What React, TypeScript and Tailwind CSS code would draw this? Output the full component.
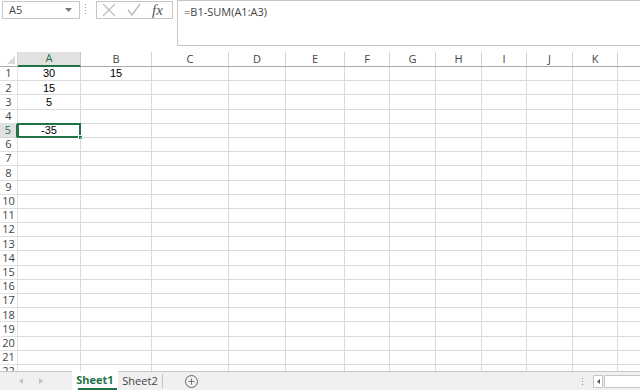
import { Plus } from 'lucide-react'

const cols = [
  { name: 'A', w: 63 },
  { name: 'B', w: 71 },
  { name: 'C', w: 77 },
  { name: 'D', w: 57 },
  { name: 'E', w: 59 },
  { name: 'F', w: 45 },
  { name: 'G', w: 46 },
  { name: 'H', w: 46 },
  { name: 'I', w: 45 },
  { name: 'J', w: 46 },
  { name: 'K', w: 45 },
  { name: 'L', w: 60 },
]

// valores de las celdas
const data: Record<string, string> = {
  A1: '30',
  B1: '15',
  A2: '15',
  A3: '5',
  A5: '-35',
}

const rows = Array.from({ length: 22 }, (_, i) => i + 1)

export default function App() {
  return (
    <div className="w-[640px] h-[390px] overflow-hidden bg-white flex flex-col text-[#444]" style={{ fontFamily: '"Open Sans", "Liberation Sans", sans-serif' }}>
      {/* barra de fórmulas */}
      <div className="h-[52px] flex items-start shrink-0">
        <div className="ml-[2px] mt-[1px] w-[78px] h-[18px] border border-[#c6c6c6] flex items-center justify-between pl-[6px] pr-[7px] text-[11px]">
          <span>A5</span>
          <svg width="7" height="4" viewBox="0 0 7 4"><path d="M0 0h7L3.5 4z" fill="#777" /></svg>
        </div>
        <div className="mt-[4px] ml-[5px] w-[2px] flex flex-col gap-[2px]">
          {[0, 1, 2, 3].map(i => <div key={i} className="w-[1px] h-[1px] bg-[#999]" />)}
        </div>
        <div className="ml-[9px] mt-[1px] w-[77px] h-[18px] border border-[#c6c6c6] flex items-center">
          <svg width="14" height="14" viewBox="0 0 14 14" className="ml-[5px]"><path d="M1 1l12 12M13 1L1 13" stroke="#bdbdbd" strokeWidth="1.2" /></svg>
          <svg width="14" height="14" viewBox="0 0 14 14" className="ml-[11px]"><path d="M1 7l4 5 8-11" stroke="#bdbdbd" strokeWidth="1.4" fill="none" /></svg>
          <span className="ml-[11px] text-[15px] italic text-[#555] leading-none" style={{ fontFamily: '"Liberation Serif", serif' }}>fx</span>
        </div>
        <div className="ml-[4px] flex-1 h-[46px] border border-[#c6c6c6] border-r-0 pl-[6px] pt-[3px] text-[11px]">
          =B1-SUM(A1:A3)
        </div>
      </div>

      {/* hoja */}
      <div className="flex-1 overflow-hidden">
        <div className="flex h-[15px] border-b border-[#ababab]">
          <div className="w-[18px] shrink-0 border-r border-[#d4d4d4] relative">
            <svg width="8" height="8" viewBox="0 0 8 8" className="absolute right-[2px] bottom-[2px]"><path d="M8 0v8H0z" fill="#dadada" /></svg>
          </div>
          {cols.map(c => (
            <div
              key={c.name}
              style={{ width: c.w }}
              className={c.name === 'A'
                ? 'shrink-0 bg-[#e1e1e1] text-[#217346] border-r border-[#c6c6c6] border-b-2 border-b-[#217346] -mb-[1px] flex items-center justify-center text-[11px]'
                : 'shrink-0 border-r border-[#d4d4d4] flex items-center justify-center text-[11px]'}
            >
              {c.name}
            </div>
          ))}
        </div>
        {rows.map(r => (
          <div key={r} className="flex h-[14.2px]">
            <div className={r === 5
              ? 'w-[18px] shrink-0 bg-[#e1e1e1] text-[#217346] border-r-2 border-r-[#217346] border-b border-[#d4d4d4] flex items-center justify-center text-[11px]'
              : 'w-[18px] shrink-0 border-r border-[#ababab] border-b border-[#e1e1e1] flex items-center justify-center text-[11px]'}>
              {r}
            </div>
            {cols.map(c => {
              const id = c.name + r
              return (
                <div key={id} style={{ width: c.w }} className="shrink-0 border-r border-b border-[#dadada] flex items-center justify-center text-[11px] text-black relative" >
                  <span style={{ fontFamily: '"Liberation Sans", sans-serif' }}>{data[id]}</span>
                  {id === 'A5' && (
                    <>
                      <div className="absolute -left-[1px] -top-[1px] -right-[1px] -bottom-[1px] border-2 border-[#217346]" />
                      <div className="absolute -right-[3px] -bottom-[3px] w-[5px] h-[5px] bg-[#217346] border border-white" />
                    </>
                  )}
                </div>
              )
            })}
          </div>
        ))}
      </div>

      {/* pestañas */}
      <div className="h-[19px] shrink-0 bg-[#f0f0f0] border-t border-[#c6c6c6] flex items-stretch text-[11px] relative">
        <div className="w-[72px] flex items-center">
          <svg width="4" height="6" viewBox="0 0 4 6" className="ml-[19px]"><path d="M4 0v6L0 3z" fill="#c0c0c0" /></svg>
          <svg width="4" height="6" viewBox="0 0 4 6" className="ml-[16px]"><path d="M0 0v6l4-3z" fill="#c0c0c0" /></svg>
        </div>
        <div className="w-[46px] bg-white -mt-[1px] flex flex-col items-center justify-center relative">
          <span className="font-bold text-[#217346]">Sheet1</span>
          <div className="absolute left-[6px] right-[1px] bottom-0 h-[2px] bg-[#217346]" />
        </div>
        <div className="w-[45px] flex items-center justify-center border-r border-[#c6c6c6] my-[2px]">Sheet2</div>
        <div className="ml-[22px] flex items-center">
          <div className="w-[13px] h-[13px] rounded-full border border-[#666] flex items-center justify-center">
            <Plus size={9} strokeWidth={2} color="#555" />
          </div>
        </div>
        <div className="ml-auto flex items-center">
          <div className="flex flex-col gap-[2px] mr-[10px]">
            {[0, 1, 2].map(i => <div key={i} className="w-[1px] h-[1px] bg-[#888]" />)}
          </div>
          <div className="w-[10px] h-[13px] border border-[#c6c6c6] bg-white flex items-center justify-center">
            <svg width="3" height="5" viewBox="0 0 3 5"><path d="M3 0v5L0 2.5z" fill="#555" /></svg>
          </div>
          <div className="w-[36px] h-[13px] ml-[1px] border border-[#c6c6c6] border-r-0 bg-white" />
        </div>
      </div>
    </div>
  )
}
